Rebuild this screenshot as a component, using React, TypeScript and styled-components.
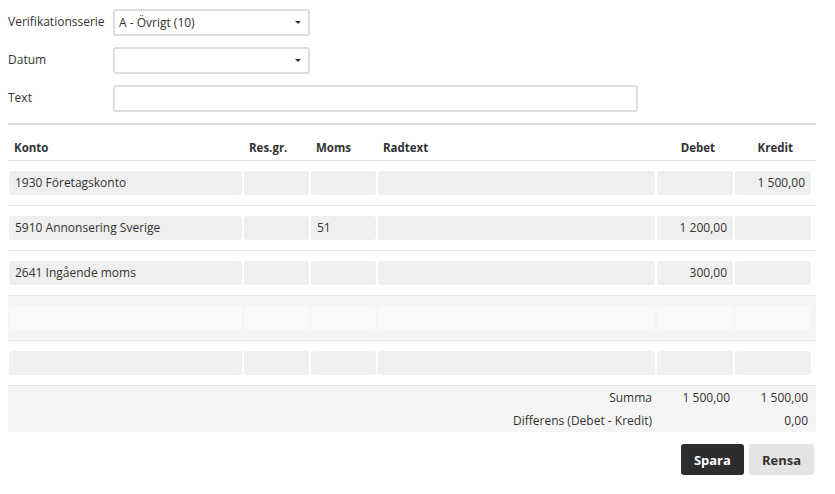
import * as React from 'react';
import styled, { createGlobalStyle } from 'styled-components';

const GlobalStyle = createGlobalStyle`
    body {
        margin: 0;
        background: #fff;
        font-family: "Open Sans", "Liberation Sans", sans-serif;
        font-size: 12px;
        color: #333;
    }
`;

const Page = styled.div`
    width: 808px;
    padding: 9px 0 0 8px;
`;

const FormRow = styled.div`
    display: flex;
    align-items: flex-start;
    margin-bottom: 11px;
`;

const Label = styled.div`
    width: 105px;
    padding-top: 4px;
    line-height: 17px;
`;

const SelectBox = styled.div`
    box-sizing: border-box;
    width: 197px;
    height: 27px;
    border: 2px solid #dedede;
    border-radius: 3px;
    display: flex;
    align-items: center;
    justify-content: space-between;
    padding: 0 7px 0 4px;
`;

const Caret = styled.span`
    width: 0;
    height: 0;
    border-left: 3px solid transparent;
    border-right: 3px solid transparent;
    border-top: 3px solid #333;
`;

const TextInput = styled.div`
    box-sizing: border-box;
    width: 525px;
    height: 27px;
    border: 2px solid #dedede;
    border-radius: 3px;
`;

const Divider = styled.div`
    height: 2px;
    background: #dddddd;
`;

const Grid = styled.div`
    display: grid;
    grid-template-columns: 233px 65px 65px 277px 76px 76px;
    column-gap: 2px;
    padding: 0 5px 0 1px;
`;

const HeaderRow = styled(Grid)`
    padding-top: 15px;
    padding-bottom: 4px;
    border-bottom: 1px solid #dddddd;
    font-weight: 700;
    line-height: 16px;
    font-size: 11.5px;
`;

const HeadCell = styled.div<{ $right?: boolean }>`
    padding: ${p => (p.$right ? '0 18px 0 0' : '0 0 0 5px')};
    text-align: ${p => (p.$right ? 'right' : 'left')};
`;

const BodyRow = styled(Grid)<{ $hover?: boolean }>`
    padding-top: 10px;
    padding-bottom: 10px;
    border-bottom: 1px solid #e5e5e5;
    background: ${p => (p.$hover ? '#f5f5f5' : 'transparent')};
`;

const Cell = styled.div<{ $right?: boolean; $hover?: boolean }>`
    height: 24px;
    line-height: 24px;
    border-radius: 3px;
    background: ${p => (p.$hover ? '#f9f9f9' : '#efefef')};
    padding: 0 6px;
    text-align: ${p => (p.$right ? 'right' : 'left')};
    white-space: nowrap;
    overflow: hidden;
`;

const Summary = styled(Grid)`
    background: #f5f5f5;
    line-height: 23px;
`;

const SummaryLabel = styled.div`
    grid-column: 1 / span 4;
    text-align: right;
    padding-right: 3px;
`;

const SummaryValue = styled.div`
    text-align: right;
    padding-right: 3px;
`;

const Actions = styled.div`
    display: flex;
    justify-content: flex-end;
    gap: 5px;
    margin-top: 12px;
    padding-right: 2px;
`;

const Button = styled.button<{ $primary?: boolean }>`
    height: 31px;
    border: none;
    border-radius: 3px;
    padding: 0 13px;
    font-family: "Open Sans", "Liberation Sans", sans-serif;
    font-size: 13px;
    font-weight: 700;
    background: ${p => (p.$primary ? '#2d2d2d' : '#e4e4e4')};
    color: ${p => (p.$primary ? '#ffffff' : '#333333')};
`;

interface Row {
    konto: string;
    moms: string;
    radtext: string;
    debet: string;
    kredit: string;
    hover?: boolean;
}

const rows: Row[] = [
    { konto: '1930 Företagskonto', moms: '', radtext: '', debet: '', kredit: '1 500,00' },
    { konto: '5910 Annonsering Sverige', moms: '51', radtext: '', debet: '1 200,00', kredit: '' },
    { konto: '2641 Ingående moms', moms: '', radtext: '', debet: '300,00', kredit: '' },
    { konto: '', moms: '', radtext: '', debet: '', kredit: '', hover: true },
    { konto: '', moms: '', radtext: '', debet: '', kredit: '' },
];

export default function App() {
    return (
        <Page>
            <GlobalStyle />
            <FormRow>
                <Label>Verifikationsserie</Label>
                <SelectBox>
                    <span>A - Övrigt (10)</span>
                    <Caret />
                </SelectBox>
            </FormRow>
            <FormRow>
                <Label>Datum</Label>
                <SelectBox>
                    <span />
                    <Caret />
                </SelectBox>
            </FormRow>
            <FormRow>
                <Label>Text</Label>
                <TextInput />
            </FormRow>
            <Divider />
            <HeaderRow>
                <HeadCell>Konto</HeadCell>
                <HeadCell>Res.gr.</HeadCell>
                <HeadCell>Moms</HeadCell>
                <HeadCell>Radtext</HeadCell>
                <HeadCell $right>Debet</HeadCell>
                <HeadCell $right>Kredit</HeadCell>
            </HeaderRow>
            {rows.map((r, i) => (
                <BodyRow key={i} $hover={r.hover}>
                    <Cell $hover={r.hover}>{r.konto}</Cell>
                    <Cell $hover={r.hover} />
                    <Cell $hover={r.hover}>{r.moms}</Cell>
                    <Cell $hover={r.hover}>{r.radtext}</Cell>
                    <Cell $hover={r.hover} $right>{r.debet}</Cell>
                    <Cell $hover={r.hover} $right>{r.kredit}</Cell>
                </BodyRow>
            ))}
            <Summary>
                <SummaryLabel>Summa</SummaryLabel>
                <SummaryValue>1 500,00</SummaryValue>
                <SummaryValue>1 500,00</SummaryValue>
                <SummaryLabel>Differens (Debet - Kredit)</SummaryLabel>
                <SummaryValue />
                <SummaryValue>0,00</SummaryValue>
            </Summary>
            <Actions>
                <Button $primary>Spara</Button>
                <Button>Rensa</Button>
            </Actions>
        </Page>
    );
}
